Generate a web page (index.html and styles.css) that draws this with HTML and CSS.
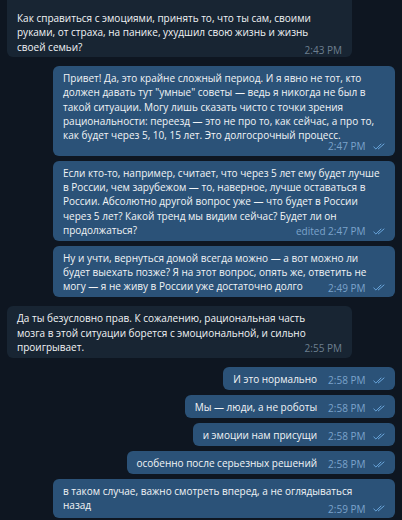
FILE: index.html
```html
<!DOCTYPE html>
<html lang="ru">
<head>
<meta charset="utf-8">
<link rel="stylesheet" href="styles.css">
</head>
<body>
<svg width="0" height="0" class="defs">
  <symbol id="dbl" viewBox="0 0 12 7">
    <path d="M0.8 4 L2.9 6 L8 1" fill="none" stroke="currentColor" stroke-width="1" stroke-linecap="round" stroke-linejoin="round"/>
    <path d="M5.3 5.9 L11 1" fill="none" stroke="currentColor" stroke-width="1" stroke-linecap="round"/>
  </symbol>
</svg>
<div class="chat">
  <div class="msg in first">Как справиться с эмоциями, принять то, что ты сам, своими руками, от страха, на панике, ухудшил свою жизнь и жизнь своей семьи?<span class="meta low"><span class="time">2:43 PM</span></span></div>

  <div class="msg out gap">Привет! Да, это крайне сложный период. И я явно не тот, кто должен давать тут "умные" советы — ведь я никогда не был в такой ситуации. Могу лишь сказать чисто с точки зрения рациональности: переезд — это не про то, как сейчас, а про то, как будет через 5, 10, 15 лет. Это долгосрочный процесс.<span class="meta row"><span class="time">2:47 PM</span><svg class="check"><use href="#dbl"/></svg></span></div>

  <div class="msg out">Если кто-то, например, считает, что через 5 лет ему будет лучше в России, чем зарубежом — то, наверное, лучше оставаться в России. Абсолютно другой вопрос уже — что будет в России через 5 лет? Какой тренд мы видим сейчас? Будет ли он продолжаться?<span class="meta"><span class="time">edited 2:47 PM</span><svg class="check"><use href="#dbl"/></svg></span></div>

  <div class="msg out">Ну и учти, вернуться домой всегда можно — а вот можно ли будет выехать позже? Я на этот вопрос, опять же, ответить не могу — я не живу в России уже достаточно долго<span class="meta"><span class="time">2:49 PM</span><svg class="check"><use href="#dbl"/></svg></span></div>

  <div class="msg in gap">Да ты безусловно прав. К сожалению, рациональная часть мозга в этой ситуации борется с эмоциональной, и сильно проигрывает.<span class="meta"><span class="time">2:55 PM</span></span></div>

  <div class="msg out gap">И это нормально<span class="meta"><span class="time">2:58 PM</span><svg class="check"><use href="#dbl"/></svg></span></div>
  <div class="msg out">Мы — люди, а не роботы<span class="meta"><span class="time">2:58 PM</span><svg class="check"><use href="#dbl"/></svg></span></div>
  <div class="msg out">и эмоции нам присущи<span class="meta"><span class="time">2:58 PM</span><svg class="check"><use href="#dbl"/></svg></span></div>
  <div class="msg out">особенно после серьезных решений<span class="meta"><span class="time">2:58 PM</span><svg class="check"><use href="#dbl"/></svg></span></div>
  <div class="msg out">в таком случае, важно смотреть вперед, а не оглядываться назад<span class="meta low"><span class="time">2:59 PM</span><svg class="check"><use href="#dbl"/></svg></span></div>
</div>
</body>
</html>
```
FILE: styles.css
```css
html, body {
  margin: 0;
  padding: 0;
  background: #0e1621;
}
body {
  font-family: "Open Sans", "Noto Sans", sans-serif;
  color: #f2f4f6;
  overflow: hidden;
}
.defs {
  position: absolute;
  width: 0;
  height: 0;
}
.chat {
  display: flex;
  flex-direction: column;
  gap: 5px;
  padding: 0 7px;
  margin-top: -6px;
}
.msg {
  display: flow-root;
  font-size: 10px;
  line-height: 14.25px;
  padding: 5px 12.5px 3.5px 10px;
  border-radius: 6px;
  box-sizing: border-box;
}
.msg.in {
  align-self: flex-start;
  background: #182533;
  max-width: 345px;
  padding-right: 17px;
}
.msg.out {
  align-self: flex-end;
  background: #2b5278;
  max-width: 342px;
}
.msg.first {
  padding-top: 17px;
  padding-bottom: 1px;
}
.msg.gap {
  margin-top: 4px;
}
.meta {
  float: right;
  display: flex;
  align-items: center;
  gap: 7px;
  height: 12px;
  margin-top: 2.5px;
  margin-left: 11px;
  margin-right: -2px;
  font-size: 10px;
  line-height: 12px;
  white-space: nowrap;
}
.in .meta {
  margin-right: -7px;
}
.meta.row {
  margin-top: -2px;
}
.meta.low {
  margin-top: 4.5px;
}
.in .time {
  color: #6d7f8f;
}
.out .time {
  color: #7ba3cb;
}
.check {
  width: 12px;
  height: 7px;
  color: #6aa6dc;
}
```
